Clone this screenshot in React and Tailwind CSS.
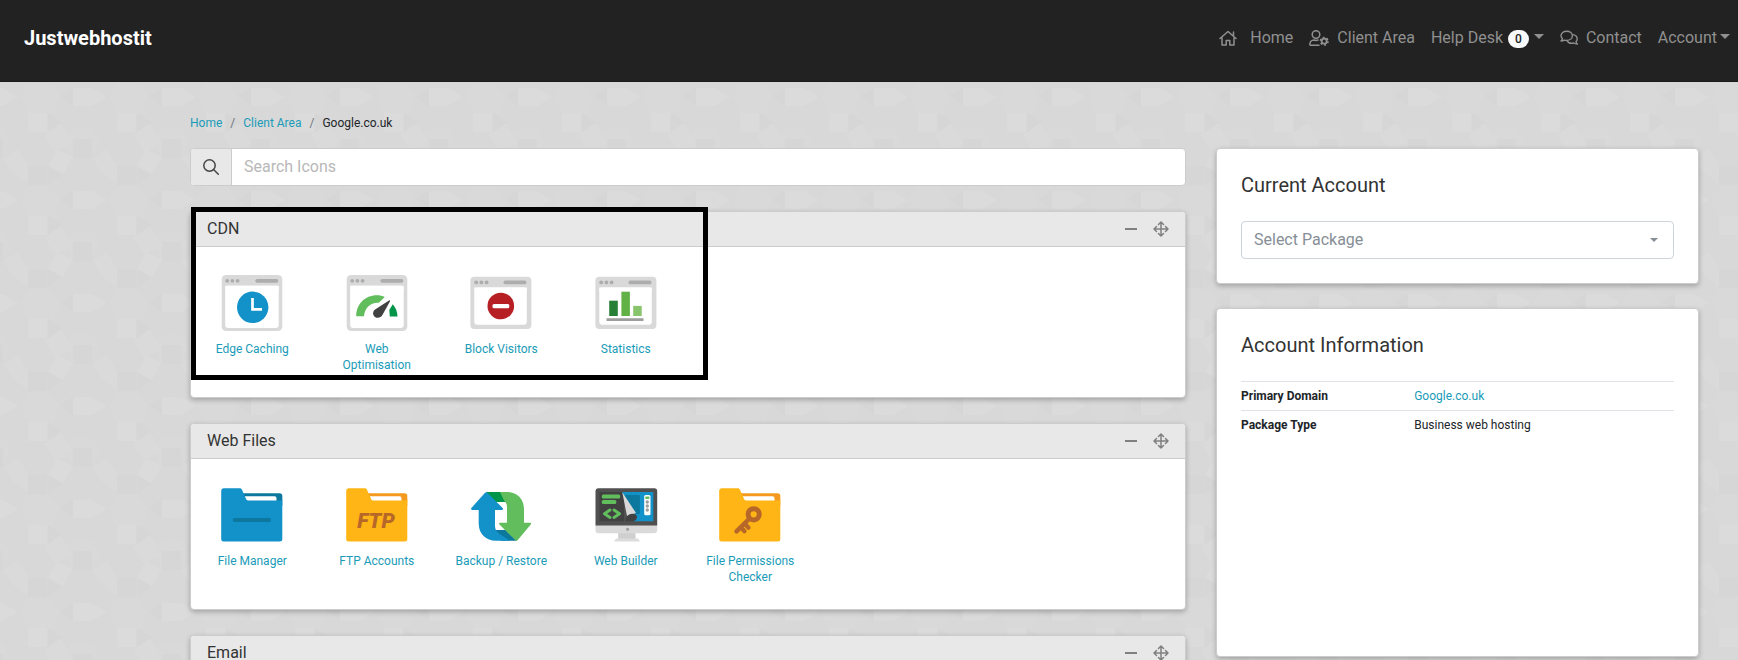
import { useState } from 'react';

const TRIANGLE_CARET = 'mb-[2px] inline-block h-0 w-0 border-x-[5px] border-t-[5px] border-x-transparent border-t-current';

function Backdrop() {
  return (
    <svg className="absolute inset-0 -z-10 h-full w-full" aria-hidden="true">
      <defs>
        <pattern id="tiles" x="0" y="82" width="89" height="103" patternUnits="userSpaceOnUse">
          <rect width="89" height="103" fill="#d8d8d8" />
          <g fill="#d9d9d9">
            <path d="M20 14 28 1 48 1 60 14 54 32 28 32Z" />
            <path d="M64 54 74 46 92 46 100 60 90 76 72 76Z" />
            <path d="M-25 54 -15 46 3 46 11 60 1 76 -17 76Z" />
          </g>
          <g fill="#d6d6d6">
            <path d="M48 31 63 41 48 50Z" />
            <path d="M73 57h19v19H73Z" />
            <path d="M-16 57h19v19h-19Z" />
            <path d="M28 84h19v19H28Z" />
            <path d="M48 84 62 93 48 102Z" />
            <path d="M60 14 73 6V24Z" />
          </g>
          <g fill="#dbdbdb">
            <path d="M73 6h19v18H73Z" />
            <path d="M-16 6H3v18h-19Z" />
            <path d="M3 6 18 15 3 24Z" />
            <path d="M28 31h19v19H28Z" />
            <path d="M57 67 73 75 63 92 48 84Z" />
          </g>
          <g fill="#dadada">
            <path d="M61 41 73 61 55 70 44 53Z" />
            <path d="M18 67 28 83V102L13 91 3 76Z" />
          </g>
        </pattern>
      </defs>
      <rect width="100%" height="100%" fill="url(#tiles)" />
    </svg>
  );
}

function HomeIcon() {
  return (
    <svg viewBox="0 0 18 16" className="h-4 w-[18px]" fill="none" stroke="currentColor" strokeWidth="1.5" strokeLinejoin="round" strokeLinecap="round" aria-hidden="true">
      <path d="M1 8.5 9 1.5l8 7M14.5 2v4M3 7.5V15h4.2v-4.5h3.6V15H15V7.5" />
    </svg>
  );
}

function UserCogIcon() {
  return (
    <svg viewBox="0 0 20 16" className="h-4 w-5" fill="none" stroke="currentColor" strokeWidth="1.5" aria-hidden="true">
      <circle cx="7" cy="4.5" r="3.8" />
      <path d="M10 15.2H1.4c-.4 0-.6-.2-.6-.6C.8 12 2.6 10 5 10c1.2.5 2.8.5 4 0" strokeLinecap="round" />
      <circle cx="15.2" cy="11.2" r="2.5" strokeWidth="1.8" />
      <circle cx="15.2" cy="11.2" r="3.8" strokeDasharray="2 1.98" />
    </svg>
  );
}

function CommentsIcon() {
  return (
    <svg viewBox="0 0 18 16" className="h-4 w-[18px]" fill="none" stroke="currentColor" strokeWidth="1.4" strokeLinejoin="round" aria-hidden="true">
      <path d="M1 11c.8-.8 1.3-1.6 1.4-2.4C1.4 7.7 1 6.8 1 5.8 1 3.2 3.5 1.2 6.7 1.2s5.7 2 5.7 4.6-2.5 4.6-5.7 4.6c-.8 0-1.5-.1-2.2-.3C3.4 10.7 2.2 11 1 11Z" />
      <path d="M12.4 4.6c2.7.2 4.8 2 4.8 4.3 0 1-.4 1.9-1.2 2.6.1.9.6 1.7 1.3 2.5-1.3 0-2.6-.3-3.6-1-2.8.7-5.6-.2-6.7-2.4" />
    </svg>
  );
}

function SearchIcon() {
  return (
    <svg viewBox="0 0 16 16" className="size-4" fill="none" stroke="currentColor" strokeWidth="1.5" strokeLinecap="round" aria-hidden="true">
      <circle cx="6.5" cy="6.5" r="5.7" />
      <path d="m10.8 10.8 4.5 4.5" />
    </svg>
  );
}

function MoveIcon() {
  return (
    <svg viewBox="0 0 16 16" className="size-4" fill="none" stroke="currentColor" strokeWidth="1.5" strokeLinejoin="round" strokeLinecap="round" aria-hidden="true">
      <path d="M8 1v14M1 8h14M5.5 3.5 8 1l2.5 2.5M5.5 12.5 8 15l2.5-2.5M3.5 5.5 1 8l2.5 2.5M12.5 5.5 15 8l-2.5 2.5" />
    </svg>
  );
}

function TallWindow({ children }) {
  return (
    <svg viewBox="0 0 64 64" className="size-16" aria-hidden="true">
      <rect x="1.7" y="5" width="60.6" height="56" rx="4.5" fill="#d9d9d9" />
      <rect x="5.2" y="15.7" width="53.5" height="42.3" rx="3" fill="#fff" />
      <path d="M5.2 15.7h53.5v4H5.2Z" fill="#fff" />
      <g fill="#adadad">
        <circle cx="7.2" cy="10.8" r="1.9" />
        <circle cx="12.4" cy="10.8" r="1.9" />
        <circle cx="17.6" cy="10.8" r="1.9" />
        <rect x="35.3" y="8.9" width="23" height="3.8" rx="1.9" />
      </g>
      {children}
    </svg>
  );
}

function WideWindow({ children }) {
  return (
    <svg viewBox="0 0 64 64" className="size-16" aria-hidden="true">
      <rect x="1.4" y="6.7" width="61" height="52.3" rx="4" fill="#d9d9d9" />
      <rect x="5.3" y="17.5" width="52.5" height="37.3" rx="3" fill="#fff" />
      <path d="M5.3 17.5h52.5v4H5.3Z" fill="#fff" />
      <g fill="#adadad">
        <circle cx="7.2" cy="12.4" r="1.9" />
        <circle cx="12.4" cy="12.4" r="1.9" />
        <circle cx="17.6" cy="12.4" r="1.9" />
        <rect x="34.5" y="10.5" width="23" height="3.8" rx="1.9" />
      </g>
      {children}
    </svg>
  );
}

function Folder({ front, back, children }) {
  return (
    <svg viewBox="0 0 64 64" className="size-16" aria-hidden="true">
      <path d="M20 11.3h39.5a2.8 2.8 0 0 1 2.8 2.8V24H20Z" fill={back} />
      <path d="M25 14.3h29.5a2 2 0 0 1 2 2V22H25Z" fill="#fff" />
      <path d="M3.5 6.3h16.2c1.2 0 1.9.5 2.4 1.6l4 9.2c.3.9.9 1.3 1.9 1.3h32c1.5 0 2.3-.7 2.3-2V57a2.5 2.5 0 0 1-2.5 2.5H3.7A2.5 2.5 0 0 1 1.2 57V8.7a2.4 2.4 0 0 1 2.3-2.4Z" fill={front} />
      {children}
    </svg>
  );
}

function EdgeCachingIcon() {
  return (
    <TallWindow>
      <circle cx="32.7" cy="37.3" r="15.7" fill="#1292c9" />
      <path d="M32.5 28v11.3h9.5" fill="none" stroke="#fff" strokeWidth="2.7" />
    </TallWindow>
  );
}

function OptimisationIcon() {
  return (
    <TallWindow>
      <path d="M11.2 46.3C11.2 34 20 25.2 31.8 25.2c3.1 0 5.7.6 8 1.9l-6 5.7c-8.2-.6-14.2 5-14.8 13.5Z" fill="#62bd5c" />
      <path d="M47.8 34.3c2.9 3.3 4.6 7.5 4.7 12.2h-7.7l-.5-6.5Z" fill="#009548" />
      <path d="M44 30.4c.7-.3 1.2.3.9 1L37.4 45c-1.4 2.7-5 3.6-7.4 1.9-2.4-1.8-2.5-5.1-.3-7.2Z" fill="#414142" />
    </TallWindow>
  );
}

function BlockIcon() {
  return (
    <WideWindow>
      <circle cx="31.8" cy="36" r="13.3" fill="#b61f24" />
      <rect x="23.5" y="34" width="16.8" height="4.2" rx="1.5" fill="#fff" />
    </WideWindow>
  );
}

function StatisticsIcon() {
  return (
    <WideWindow>
      <path d="M15.2 30.7h8.6V46h-8.6Z" fill="#278036" />
      <path d="M27.4 21.7h8.5V46h-8.5Z" fill="#62b146" />
      <path d="M39.2 35.9h8.5V46h-8.5Z" fill="#87c46c" />
      <path d="M12.5 48.2h37V51h-37Z" fill="#9d9d9d" />
    </WideWindow>
  );
}

function FileManagerIcon() {
  return (
    <Folder front="#1292c9" back="#0d789e">
      <rect x="12.7" y="36" width="38.3" height="4" rx="2" fill="#0d789e" />
    </Folder>
  );
}

function FtpIcon() {
  return (
    <Folder front="#feb515" back="#f39a1f">
      <text x="31" y="46" textAnchor="middle" fontFamily="Roboto, sans-serif" fontSize="21" fontWeight="900" fontStyle="italic" fill="#b76829">
        FTP
      </text>
    </Folder>
  );
}

function BackupIcon() {
  return (
    <svg viewBox="0 0 64 64" className="size-16" aria-hidden="true">
      <path d="M17 10h17l8 10H26Z" fill="#009548" />
      <path d="M26 48h12l10 10.7H32Z" fill="#0d789e" />
      <path d="M31 10h7c10 0 17 7 17 17v13.7h5.8c1.3 0 1.7.9.9 1.9L48.8 58c-.8.9-1.8.9-2.6 0L30.5 42.6c-.9-1-.5-1.9.8-1.9H38V25c0-3-1-4.5-3-6.5Z" fill="#62bd5c" />
      <path d="M33 58.7h-6c-10 0-17.3-7-17.3-17V28H3.3c-1.3 0-1.7-.9-.9-1.9L15.8 11c.8-.9 2-.9 2.8 0l15 15.1c.9 1 .5 1.9-.8 1.9H26v16c0 3 1.5 5.5 4 7.5l11 7.2Z" fill="#1292c9" />
    </svg>
  );
}

function WebBuilderIcon() {
  return (
    <svg viewBox="0 0 64 64" className="size-16" aria-hidden="true">
      <path d="M24.2 50h17.3v7H24.2Z" fill="#cfcfcf" />
      <path d="M22 56.5h22l2 3H20Z" fill="#dcdcdc" />
      <path d="M1.5 43h61.7v5a3.2 3.2 0 0 1-3.2 3.2H4.7A3.2 3.2 0 0 1 1.5 48Z" fill="#dadada" />
      <path d="M4.5 6.2h55.7a3 3 0 0 1 3 3v34.2H1.5V9.2a3 3 0 0 1 3-3Z" fill="#505050" />
      <path d="M5.5 10H30v29.3H5.5Z" fill="#414142" />
      <path d="M28.3 10h31v29.3H39Z" fill="#1292c9" />
      <path d="M30 13h14.8a1 1 0 0 1 1 1v17a1 1 0 0 1-1 1H39Z" fill="#0d789e" />
      <path d="M28.3 10.3 42 31l-9 3Z" fill="#d9d9d9" />
      <path d="M32.5 35c2-3.2 6-4.2 9-2.6 3 1.7 1.3 6.9-3.5 6.9h-7Z" fill="#414142" />
      <rect x="50.2" y="13" width="6.3" height="20.3" rx="1.5" fill="#fff" />
      <rect x="51.2" y="14.5" width="4.3" height="2.5" rx="1" fill="#62bd5c" />
      <g fill="#9d9d9d">
        <circle cx="53.3" cy="20" r="1.7" />
        <circle cx="53.3" cy="24" r="1.7" />
        <circle cx="53.3" cy="28" r="1.7" />
        <circle cx="33.6" cy="47.3" r="1.5" />
      </g>
      <g fill="#62bd5c">
        <rect x="7.8" y="12.6" width="18.4" height="4" rx="1.5" />
        <rect x="7.8" y="18" width="14.5" height="4" rx="1.5" />
      </g>
      <path d="m16 28-5.5 3.7L16 35.4M20 28l5.5 3.7L20 35.4" fill="none" stroke="#62bd5c" strokeWidth="3" strokeLinecap="round" strokeLinejoin="round" />
    </svg>
  );
}

function PermissionsIcon() {
  return (
    <Folder front="#feb515" back="#f39a1f">
      <g fill="none" stroke="#b76829" strokeLinecap="round">
        <circle cx="35.7" cy="32.3" r="5.6" strokeWidth="5" />
        <path d="M31 37 18.5 49.3" strokeWidth="4.5" />
        <path d="m23.5 46 3 3.2M27.5 42.5l3 3.2" strokeWidth="4.3" />
      </g>
    </Folder>
  );
}

const SECTIONS = [
  {
    title: 'CDN',
    items: [
      { label: 'Edge Caching', Icon: EdgeCachingIcon },
      { label: 'Web Optimisation', Icon: OptimisationIcon },
      { label: 'Block Visitors', Icon: BlockIcon },
      { label: 'Statistics', Icon: StatisticsIcon },
    ],
    highlighted: true,
  },
  {
    title: 'Web Files',
    items: [
      { label: 'File Manager', Icon: FileManagerIcon },
      { label: 'FTP Accounts', Icon: FtpIcon },
      { label: 'Backup / Restore', Icon: BackupIcon },
      { label: 'Web Builder', Icon: WebBuilderIcon },
      { label: 'File Permissions Checker', Icon: PermissionsIcon },
    ],
  },
  { title: 'Email', items: [] },
];

function Header() {
  return (
    <header className="flex h-[82px] items-center justify-between border-b border-[#1a1a1a] bg-[#222] pr-2 pb-[6px] pl-6">
      <a href="#" className="text-xl font-bold text-white">Justwebhostit</a>
      <nav className="flex items-center gap-4 text-base text-[#909090]">
        <a href="#" className="flex items-center gap-[13px]">
          <HomeIcon />
          Home
        </a>
        <a href="#" className="flex items-center gap-2">
          <UserCogIcon />
          Client Area
        </a>
        <button type="button" className="flex items-center gap-[5px]">
          Help Desk
          <span className="mt-[3px] rounded-full bg-[#f8f9fa] px-[7px] text-xs leading-[18px] font-medium text-[#212529]">0</span>
          <span className={TRIANGLE_CARET} />
        </button>
        <a href="#" className="flex items-center gap-2">
          <CommentsIcon />
          Contact
        </a>
        <button type="button" className="flex items-center gap-[3px]">
          Account
          <span className={TRIANGLE_CARET} />
        </button>
      </nav>
    </header>
  );
}

function Section({ title, items, highlighted }) {
  const [open, setOpen] = useState(true);

  return (
    <section className="relative mt-[25px] rounded border border-[#ccc] bg-white shadow-[0_2px_5px_rgba(0,0,0,0.25)]">
      <div className="flex h-[35px] items-center justify-between rounded-t border-b border-[#ccc] bg-[#e8e8e8] px-4">
        <h2 className="text-base text-[#333]">{title}</h2>
        <div className="flex items-center gap-4 text-[#808080]">
          <button type="button" onClick={() => setOpen(!open)} aria-label={`Collapse ${title}`} className="flex h-4 w-3 items-center">
            <span className="h-[2px] w-3 bg-current" />
          </button>
          <button type="button" aria-label={`Move ${title}`}>
            <MoveIcon />
          </button>
        </div>
      </div>
      {open && (
        <div className="-mx-px grid grid-cols-8 pt-[23px] pb-6">
          {items.map(({ label, Icon }) => (
            <a key={label} href="#" className="flex flex-col items-center gap-[7px] px-[15px] text-center text-xs text-[#1a9bb8]">
              <Icon />
              <span>{label}</span>
            </a>
          ))}
        </div>
      )}
      {highlighted && (
        <div className="pointer-events-none absolute -top-[5px] left-0 h-[173px] w-[517px] border-[5px] border-black" />
      )}
    </section>
  );
}

function Card({ title, className, children }) {
  return (
    <section className={`rounded border border-[#ccc] bg-white px-6 shadow-[0_2px_5px_rgba(0,0,0,0.25)] ${className}`}>
      <h2 className="pt-[22px] text-xl text-[#333]">{title}</h2>
      {children}
    </section>
  );
}

export default function App() {
  return (
    <div className="relative isolate h-screen overflow-hidden font-[Roboto,sans-serif] text-[#212529]">
      <Backdrop />
      <Header />
      <main className="pt-[33px] pr-6 pl-[175px]">
        <nav aria-label="Breadcrumb" className="flex gap-2 px-[15px] text-xs">
          <a href="#" className="text-[#1a9bb8]">Home</a>
          <span className="text-[#6c757d]">/</span>
          <a href="#" className="text-[#1a9bb8]">Client Area</a>
          <span className="text-[#6c757d]">/</span>
          <span>Google.co.uk</span>
        </nav>

        <div className="mt-[17px] grid grid-cols-3 items-start">
          <div className="col-span-2 px-[15px]">
            <label className="flex h-[38px] overflow-hidden rounded border border-[#ccc] bg-white">
              <span className="flex w-[41px] items-center justify-center border-r border-[#ccc] bg-[#e8e8e8] text-[#444]">
                <SearchIcon />
              </span>
              <input
                type="search"
                placeholder="Search Icons"
                aria-label="Search Icons"
                className="min-w-0 flex-1 px-3 text-base outline-none placeholder:text-[#b8b8b8]"
              />
            </label>
            {SECTIONS.map((section) => (
              <Section key={section.title} {...section} />
            ))}
          </div>

          <div className="flex flex-col gap-6 px-[15px]">
            <Card title="Current Account" className="pb-6">
              <div className="relative mt-[22px] text-[#868e96]">
                <select aria-label="Select Package" className="h-[38px] w-full appearance-none rounded border border-[#ced4da] bg-white px-3 text-base">
                  <option>Select Package</option>
                </select>
                <span className="pointer-events-none absolute top-[17px] right-4 h-0 w-0 border-x-4 border-t-4 border-x-transparent border-t-current" />
              </div>
            </Card>
            <Card title="Account Information" className="min-h-[349px]">
              <table className="mt-[22px] w-full table-fixed text-left text-xs">
                <tbody>
                  <tr className="border-t border-[#dee2e6]">
                    <th scope="row" className="w-2/5 py-[6px] font-bold">Primary Domain</th>
                    <td className="py-[6px]">
                      <a href="#" className="text-[#1a9bb8]">Google.co.uk</a>
                    </td>
                  </tr>
                  <tr className="border-t border-[#dee2e6]">
                    <th scope="row" className="py-[6px] font-bold">Package Type</th>
                    <td className="py-[6px]">Business web hosting</td>
                  </tr>
                </tbody>
              </table>
            </Card>
          </div>
        </div>
      </main>
    </div>
  );
}
